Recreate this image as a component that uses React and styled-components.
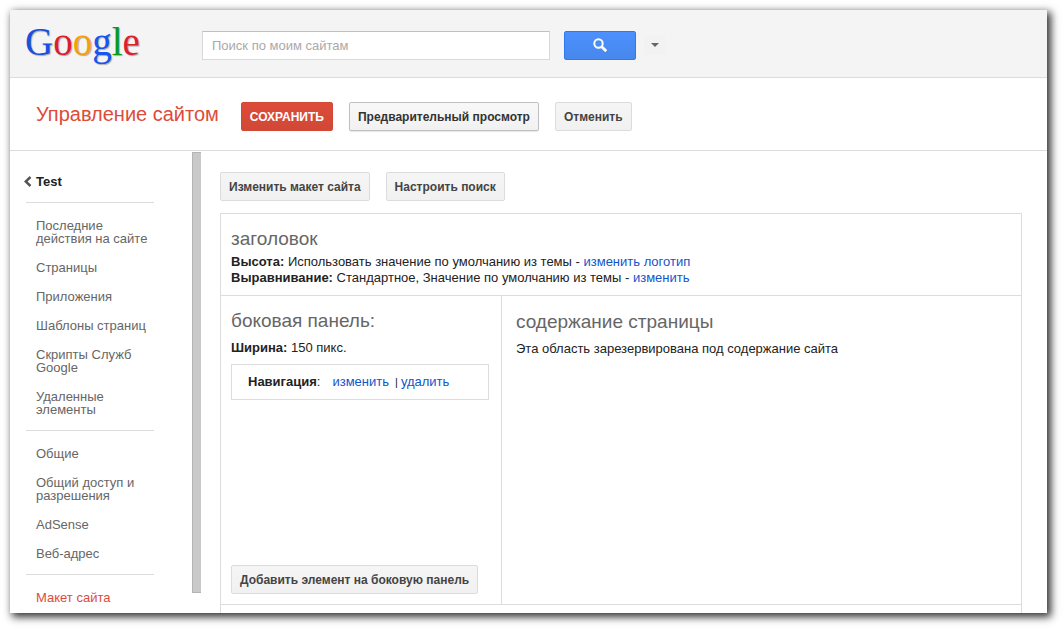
import React, { useState } from "react";
import styled, { createGlobalStyle, css } from "styled-components";

const GlobalStyle = createGlobalStyle`
  * {
    box-sizing: border-box;
  }

  body {
    margin: 0;
    background: #fff;
    color: #222;
    font: 13px/16px "Liberation Sans", Arial, sans-serif;
  }
`;

const StyledPage = styled.div`
  display: flex;
  height: 100vh;
  padding: 10px 17px 17px 10px;
  overflow: hidden;
`;

const StyledWindow = styled.div`
  display: flex;
  flex: 1;
  flex-direction: column;
  min-width: 0;
  background: #fff;
  box-shadow: 3px 3px 8px 1px rgba(0, 0, 0, 0.8);
`;

const StyledHeader = styled.header`
  display: flex;
  flex: none;
  align-items: center;
  height: 68px;
  padding: 0 15px;
  background: #f4f4f4;
  border-bottom: 1px solid #dcdcdc;
`;

const StyledLogo = styled.a`
  width: 177px;
  padding-bottom: 4px;
  font: 39px/44px "Liberation Serif", "Times New Roman", serif;
  text-decoration: none;
  text-shadow: 1px 1px 1px rgba(0, 0, 0, 0.3);
`;

const StyledLetter = styled.span`
  color: ${(props) => props.$color};
`;

const StyledSearch = styled.form`
  display: flex;
  align-items: center;
  padding-top: 3px;
`;

const StyledInput = styled.input`
  width: 348px;
  height: 29px;
  padding: 0 9px;
  border: 1px solid #d9d9d9;
  border-top-color: #c0c0c0;
  background: #fff;
  font: inherit;

  &::placeholder {
    color: #a9a9a9;
  }
`;

const StyledSearchButton = styled.button`
  display: flex;
  align-items: center;
  justify-content: center;
  width: 72px;
  height: 29px;
  margin-left: 14px;
  padding: 0;
  border: 1px solid #3079ed;
  border-radius: 2px;
  background: linear-gradient(#4d90fe, #4787ed);
  cursor: pointer;
`;

const StyledOptionsButton = styled.button`
  display: flex;
  align-items: center;
  justify-content: center;
  width: 21px;
  height: 20px;
  margin-left: 8px;
  padding: 0;
  border: none;
  background: #f2f2f2;
  cursor: pointer;
`;

const StyledToolbar = styled.div`
  display: flex;
  flex: none;
  align-items: center;
  gap: 16px;
  height: 73px;
  padding: 4px 26px 0;
  border-bottom: 1px solid #dcdcdc;
`;

const StyledTitle = styled.h1`
  margin: 0 6px 4px 0;
  color: #dd4b39;
  font-size: 20px;
  font-weight: normal;
  line-height: 24px;
`;

const variants = {
  primary: css`
    border-color: #d14836;
    background: linear-gradient(#dd4b39, #d14836);
    color: #fff;
    text-transform: uppercase;
  `,
  strong: css`
    border-color: #c0c0c0;
    background: linear-gradient(#f8f8f8, #f1f1f1);
    box-shadow: 0 1px 1px rgba(0, 0, 0, 0.1);
    color: #333;
  `,
};

const StyledButton = styled.button`
  height: 29px;
  padding: 1px 8px 0;
  border: 1px solid #dcdcdc;
  border-radius: 2px;
  background: linear-gradient(#f5f5f5, #f1f1f1);
  color: #444;
  font: bold 12px/26px "Liberation Sans", Arial, sans-serif;
  white-space: nowrap;
  cursor: pointer;
  ${(props) => variants[props.$variant]}
`;

const StyledBody = styled.div`
  display: flex;
  flex: 1;
  min-height: 0;
  overflow: hidden;
`;

const StyledSidebar = styled.nav`
  flex: none;
  width: 182px;
  padding: 23px 38px 0 14px;
`;

const StyledBack = styled.a`
  display: flex;
  align-items: center;
  gap: 4px;
  padding-bottom: 12px;
  color: #222;
  font-weight: bold;
  text-decoration: none;
`;

const StyledNavList = styled.ul`
  margin: 0 0 0 2px;
  padding: 8px 0 6px;
  border-top: 1px solid #dcdcdc;
  list-style: none;
`;

const StyledNavLink = styled.a`
  display: block;
  padding: 8px 0 8px 10px;
  color: ${(props) => (props.$active ? "#dd4b39" : "#666")};
  line-height: 13px;
  text-decoration: none;
`;

const StyledScrollbar = styled.div`
  flex: none;
  width: 9px;
  margin: 1px 0 20px;
  border: 1px solid #b4b4b4;
  border-right: none;
  background: #c9c9c9;
`;

const StyledMain = styled.main`
  flex: 1;
  min-width: 0;
  padding: 21px 25px 0 19px;
`;

const StyledActions = styled.div`
  display: flex;
  gap: 16px;
  margin-bottom: 12px;
`;

const StyledLayout = styled.div`
  border: 1px solid #dcdcdc;
`;

const StyledColumns = styled.div`
  display: flex;
  height: 310px;
  border: solid #dcdcdc;
  border-width: 1px 0;
`;

const StyledArea = styled.section`
  display: flex;
  flex: ${(props) => (props.$width ? "none" : "1")};
  flex-direction: column;
  align-items: flex-start;
  width: ${(props) => props.$width || "auto"};
  padding: ${(props) => props.$padding};
  border-right: ${(props) => (props.$divided ? "1px solid #dcdcdc" : "none")};
`;

const StyledAreaTitle = styled.h2`
  margin: 0 0 ${(props) => (props.$spaced ? "8px" : "4px")};
  color: #666;
  font-size: 19px;
  font-weight: normal;
  line-height: 22px;
`;

const StyledText = styled.p`
  margin: 0;
`;

const StyledLink = styled.a`
  color: #15c;
  text-decoration: none;
`;

const StyledWidget = styled.div`
  display: flex;
  align-self: stretch;
  margin: 8px 0 auto;
  padding: 9px 16px;
  border: 1px solid #dcdcdc;
`;

const StyledWidgetName = styled.span`
  margin-right: 12px;
`;

const StyledSeparator = styled.span`
  margin: 0 3px 0 6px;
  font-size: 11px;
`;

const StyledFooterArea = styled.div`
  height: 80px;
`;

const logo = [
  ["G", "#1a4fe0"],
  ["o", "#dc1f30"],
  ["o", "#f5a006"],
  ["g", "#1a55f0"],
  ["l", "#0a9a1c"],
  ["e", "#dc1f30"],
];

const navGroups = [
  [
    "Последние действия на сайте",
    "Страницы",
    "Приложения",
    "Шаблоны страниц",
    "Скрипты Служб Google",
    "Удаленные элементы",
  ],
  ["Общие", "Общий доступ и разрешения", "AdSense", "Веб-адрес"],
  ["Макет сайта"],
];

function Header() {
  const [query, setQuery] = useState("");

  return (
    <StyledHeader>
      <StyledLogo href="#" aria-label="Google">
        {logo.map(([letter, color], i) => (
          <StyledLetter key={i} $color={color}>{letter}</StyledLetter>
        ))}
      </StyledLogo>
      <StyledSearch onSubmit={(event) => event.preventDefault()}>
        <StyledInput
          type="text"
          name="query"
          aria-label="Поиск по моим сайтам"
          placeholder="Поиск по моим сайтам"
          value={query}
          onChange={(event) => setQuery(event.target.value)}
        />
        <StyledSearchButton type="submit" aria-label="Поиск">
          <svg width="14" height="14" viewBox="0 0 14 14" fill="none" stroke="#fff">
            <circle cx="5.5" cy="5.5" r="4.2" strokeWidth="2" />
            <path d="M8.5 8.5l4.7 4.7" strokeWidth="2.8" />
          </svg>
        </StyledSearchButton>
        <StyledOptionsButton type="button" aria-label="Параметры поиска">
          <svg width="8" height="4" viewBox="0 0 8 4">
            <path d="M0 0h8L4 4z" fill="#666" />
          </svg>
        </StyledOptionsButton>
      </StyledSearch>
    </StyledHeader>
  );
}

function Sidebar() {
  return (
    <StyledSidebar>
      <StyledBack href="#">
        <svg width="8" height="12" viewBox="0 0 8 12" fill="none" stroke="#555" strokeWidth="2.4">
          <path d="M6.5 1L1.7 5.5l4.8 4.5" />
        </svg>
        Test
      </StyledBack>
      {navGroups.map((group, i) => (
        <StyledNavList key={i}>
          {group.map((item) => (
            <li key={item}>
              <StyledNavLink href="#" $active={item === "Макет сайта"}>{item}</StyledNavLink>
            </li>
          ))}
        </StyledNavList>
      ))}
    </StyledSidebar>
  );
}

function SiteLayout() {
  return (
    <StyledLayout>
      <StyledArea $padding="14px 10px 9px">
        <StyledAreaTitle>заголовок</StyledAreaTitle>
        <StyledText>
          <b>Высота:</b> Использовать значение по умолчанию из темы -{" "}
          <StyledLink href="#">изменить логотип</StyledLink>
        </StyledText>
        <StyledText>
          <b>Выравнивание:</b> Стандартное, Значение по умолчанию из темы -{" "}
          <StyledLink href="#">изменить</StyledLink>
        </StyledText>
      </StyledArea>
      <StyledColumns>
        <StyledArea $width="281px" $padding="14px 12px 10px 10px" $divided>
          <StyledAreaTitle $spaced>боковая панель:</StyledAreaTitle>
          <StyledText><b>Ширина:</b> 150 пикс.</StyledText>
          <StyledWidget>
            <StyledWidgetName><b>Навигация</b>:</StyledWidgetName>
            <StyledLink href="#">изменить</StyledLink>
            <StyledSeparator>|</StyledSeparator>
            <StyledLink href="#">удалить</StyledLink>
          </StyledWidget>
          <StyledButton type="button">Добавить элемент на боковую панель</StyledButton>
        </StyledArea>
        <StyledArea $padding="15px 14px">
          <StyledAreaTitle $spaced>содержание страницы</StyledAreaTitle>
          <StyledText>Эта область зарезервирована под содержание сайта</StyledText>
        </StyledArea>
      </StyledColumns>
      <StyledFooterArea />
    </StyledLayout>
  );
}

function App() {
  return (
    <>
      <GlobalStyle />
      <StyledPage>
        <StyledWindow>
          <Header />
          <StyledToolbar>
            <StyledTitle>Управление сайтом</StyledTitle>
            <StyledButton type="button" $variant="primary">Сохранить</StyledButton>
            <StyledButton type="button" $variant="strong">Предварительный просмотр</StyledButton>
            <StyledButton type="button">Отменить</StyledButton>
          </StyledToolbar>
          <StyledBody>
            <Sidebar />
            <StyledScrollbar />
            <StyledMain>
              <StyledActions>
                <StyledButton type="button">Изменить макет сайта</StyledButton>
                <StyledButton type="button">Настроить поиск</StyledButton>
              </StyledActions>
              <SiteLayout />
            </StyledMain>
          </StyledBody>
        </StyledWindow>
      </StyledPage>
    </>
  );
}

export default App;
